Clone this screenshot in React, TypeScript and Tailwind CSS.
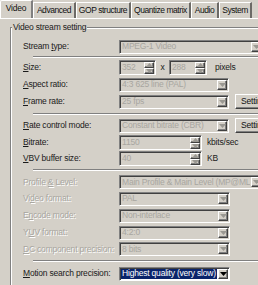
import React from "react";

const sunken =
  "border border-t-[#808080] border-l-[#808080] border-b-white border-r-white shadow-[inset_1px_1px_0_#404040]";
const raised =
  "border border-t-white border-l-white border-b-[#404040] border-r-[#404040] shadow-[inset_-1px_-1px_0_#808080]";

const Arrow = ({ up = false, disabled = false }: { up?: boolean; disabled?: boolean }) => (
  <svg width="7" height="4" viewBox="0 0 7 4" className={up ? "rotate-180" : ""}>
    <path d="M0 0h7L3.5 4z" fill={disabled ? "#9a9892" : "#000"} />
  </svg>
);

const Combo = ({
  w,
  text,
  disabled = true,
  selected = false,
}: {
  w: string;
  text: string;
  disabled?: boolean;
  selected?: boolean;
}) => (
  <div className={`${w} h-[14px] flex items-stretch shrink-0 ${sunken} ${disabled ? "bg-[#d4d0c8]" : "bg-white"}`}>
    <div className="flex-1 flex items-center pl-[1px] pr-[1px] overflow-hidden whitespace-nowrap">
      <span
        className={
          selected
            ? "bg-[#0a246a] text-white px-[1px] h-[10px] flex items-center flex-1"
            : disabled
            ? "text-[#a8a6a0] px-[1px]"
            : "text-black px-[1px]"
        }
      >
        {text}
      </span>
    </div>
    <div className={`w-[10px] m-[1px] flex items-center justify-center bg-[#d4d0c8] ${raised}`}>
      <Arrow disabled={disabled} />
    </div>
  </div>
);

const Spin = ({ w, text }: { w: string; text: string }) => (
  <div className={`${w} h-[15px] flex items-stretch shrink-0 bg-[#d4d0c8] ${sunken}`}>
    <div className="flex-1 flex items-center pl-[2px] text-[#a8a6a0] overflow-hidden whitespace-nowrap">{text}</div>
    <div className="w-[10px] m-[1px] flex flex-col">
      <div className={`flex-1 flex items-center justify-center ${raised}`}>
        <Arrow up disabled />
      </div>
      <div className={`flex-1 flex items-center justify-center ${raised}`}>
        <Arrow disabled />
      </div>
    </div>
  </div>
);

const SettingBtn = () => (
  <div className={`ml-[6px] w-[44px] h-[15px] shrink-0 flex items-center pl-[5px] bg-[#d4d0c8] text-[#111] ${raised}`}>
    Setting
  </div>
);

const Label = ({ pre = "", u, post, disabled = false }: { pre?: string; u: string; post: string; disabled?: boolean }) => (
  <div
    className={`w-[96px] shrink-0 whitespace-nowrap ${
      disabled ? "text-[#a8a6a0] [text-shadow:1px_1px_0_#fff]" : "text-[#1a1a1a]"
    }`}
  >
    {pre}
    <span className="underline underline-offset-1">{u}</span>
    {post}
  </div>
);

const Sep = ({ h }: { h: string }) => (
  <div className={`${h} flex items-center pl-[10px]`}>
    <div className="w-full h-[2px] border-t border-t-[#808080] border-b border-b-white" />
  </div>
);

const tabs = [
  { t: "Advanced", w: "w-[43px]" },
  { t: "GOP structure", w: "w-[55px]" },
  { t: "Quantize matrix", w: "w-[60px]" },
  { t: "Audio", w: "w-[28px]" },
  { t: "System", w: "w-[33px]" },
];

export default function App() {
  return (
    <div className="w-[258px] h-[285px] overflow-hidden bg-[#d4d0c8] text-[8.5px] tracking-[-0.2px] leading-none font-['Liberation_Sans',Arial,sans-serif]">
      <div className="w-[320px]">
        {/* tab strip */}
        <div className="h-[18px] flex items-end relative z-10">
          <div className="h-[18px] w-[33px] flex items-center justify-center pb-[2px] bg-[#d4d0c8] border-l border-t border-white border-r-2 border-r-[#808080] rounded-tl-[2px] text-[#111]">
            Video
          </div>
          {tabs.map(({ t, w }) => (
            <div
              key={t}
              className={`${w} h-[16px] flex items-center justify-center whitespace-nowrap tracking-[-0.45px] border-t border-t-white border-l border-l-white border-r-2 border-r-[#6c6a66] text-[#111]`}
            >
              {t}
            </div>
          ))}
        </div>
        {/* page */}
        <div className="border-t border-t-white pt-[8px] pl-[10px]">
          <div className="relative border border-[#808080] shadow-[1px_1px_0_#fff,inset_1px_1px_0_#fff] pl-[12px] pt-[10px] pb-[4px]">
            <div className="absolute -top-[5px] left-[1px] px-[1px] bg-[#d4d0c8] text-[#1a1a1a]">Video stream setting</div>
            <div className="h-[17px] flex items-center">
              <Label pre="Stream " u="t" post="ype:" />
              <Combo w="w-[144px]" text="MPEG-1 Video" />
            </div>
            <Sep h="h-[3px]" />
            <div className="h-[18px] flex items-center">
              <Label u="S" post="ize:" />
              <Spin w="w-[37px]" text="352" />
              <span className="w-[13px] text-center text-[#1a1a1a]">x</span>
              <Spin w="w-[38px]" text="288" />
              <span className="ml-[8px] text-[#1a1a1a]">pixels</span>
            </div>
            <div className="h-[17px] flex items-center">
              <Label u="A" post="spect ratio:" />
              <Combo w="w-[110px]" text="4:3 625 line (PAL)" />
            </div>
            <div className="h-[17px] flex items-center">
              <Label u="F" post="rame rate:" />
              <Combo w="w-[110px]" text="25 fps" />
              <SettingBtn />
            </div>
            <Sep h="h-[7px]" />
            <div className="h-[17px] flex items-center">
              <Label u="R" post="ate control mode:" />
              <Combo w="w-[110px]" text="Constant bitrate (CBR)" />
              <SettingBtn />
            </div>
            <div className="h-[16px] flex items-center">
              <Label u="B" post="itrate:" />
              <Spin w="w-[83px]" text="1150" />
              <span className="ml-[5px] text-[#1a1a1a]">kbits/sec</span>
            </div>
            <div className="h-[16px] flex items-center">
              <Label u="V" post="BV buffer size:" />
              <Spin w="w-[83px]" text="40" />
              <span className="ml-[5px] text-[#1a1a1a]">KB</span>
            </div>
            <Sep h="h-[8px]" />
            <div className="h-[16px] flex items-center">
              <Label pre="Profile " u="&" post=" Level:" disabled />
              <Combo w="w-[144px]" text="Main Profile & Main Level (MP@ML)" />
            </div>
            <div className="h-[17px] flex items-center">
              <Label pre="Vi" u="d" post="eo format:" disabled />
              <Combo w="w-[111px]" text="PAL" />
            </div>
            <div className="h-[17px] flex items-center">
              <Label pre="E" u="n" post="code mode:" disabled />
              <Combo w="w-[111px]" text="Non-interlace" />
            </div>
            <div className="h-[17px] flex items-center">
              <Label pre="Y" u="U" post="V format:" disabled />
              <Combo w="w-[111px]" text="4:2:0" />
            </div>
            <div className="h-[16px] flex items-center">
              <Label pre="" u="D" post="C component precision:" disabled />
              <Combo w="w-[111px]" text="8 bits" />
            </div>
            <Sep h="h-[8px]" />
            <div className="h-[17px] flex items-center">
              <Label u="M" post="otion search precision:" />
              <Combo w="w-[111px]" text="Highest quality (very slow)" disabled={false} selected />
            </div>
          </div>
        </div>
      </div>
    </div>
  );
}
